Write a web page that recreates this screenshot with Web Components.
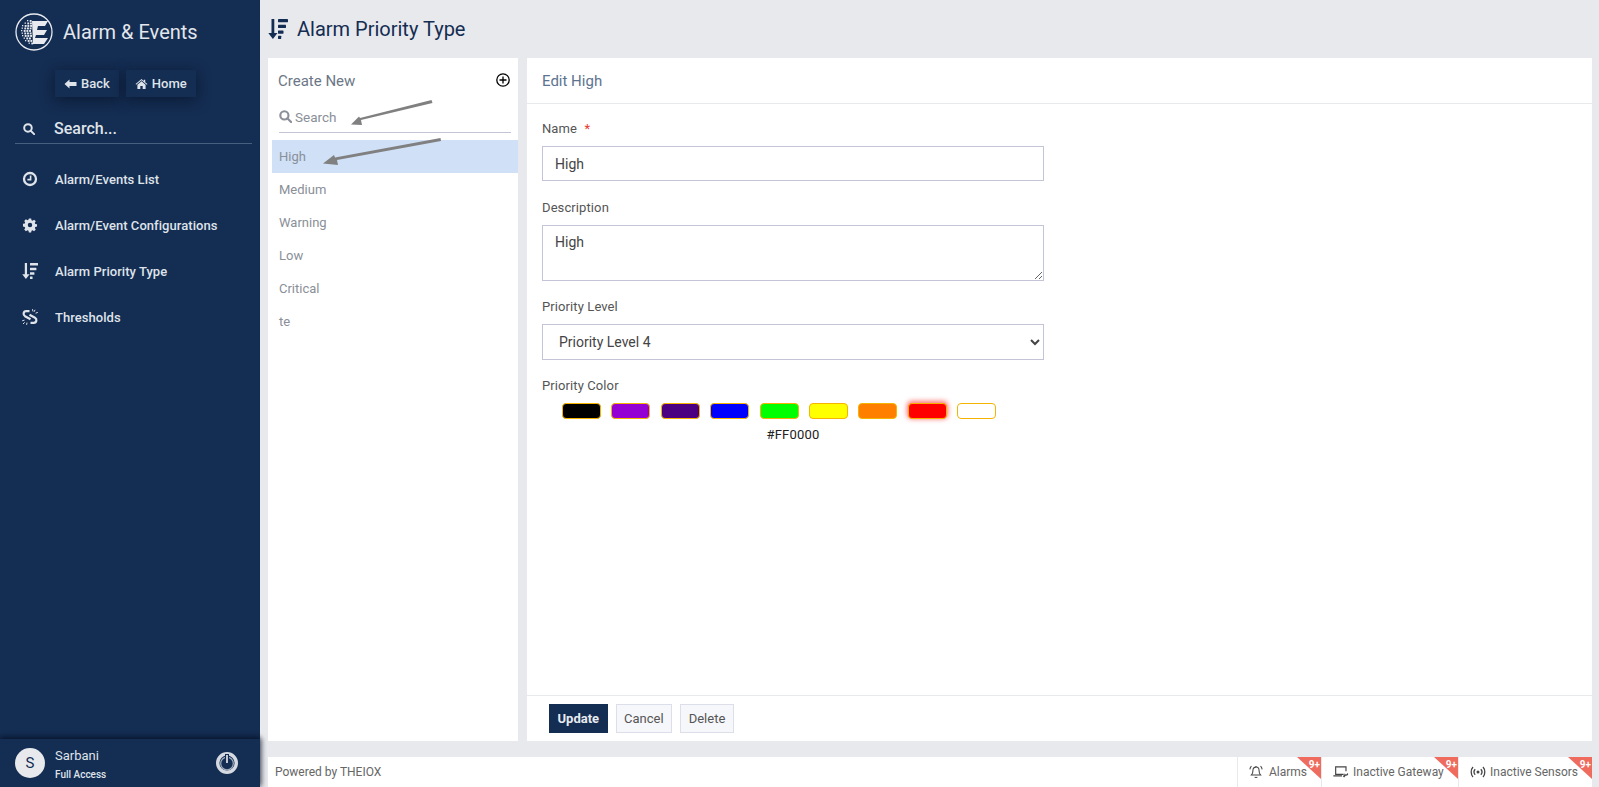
<!DOCTYPE html>
<html lang="en">
<head>
<meta charset="utf-8">
<title>Alarm Priority Type</title>
<style>
  html, body { margin: 0; height: 100%; overflow: hidden; }
  body { font-family: Roboto, "Liberation Sans", sans-serif; background: #e8e9ed; }
</style>
</head>
<body>
<app-shell>
  <side-bar slot="side"></side-bar>
  <page-title slot="title">Alarm Priority Type</page-title>
  <list-panel slot="list"></list-panel>
  <edit-panel slot="edit"></edit-panel>
  <foot-bar slot="foot"></foot-bar>
</app-shell>

<script>
// shared icons, all on their own viewBox so they can be sized from css
const ICONS = {
  sort: `<svg viewBox="0 0 20 20" fill="currentColor"><path d="M3.500 0h2.800v14h3.200L4.900 20 .3 14h3.200z"/><rect x="10" y="0" width="10" height="3.200" rx=".4"/><rect x="10" y="5.800" width="8" height="3.200" rx=".4"/><rect x="10" y="11.500" width="5.500" height="3.200" rx=".4"/><rect x="10" y="16.800" width="3.200" height="3.200" rx=".4"/></svg>`,
  clock: `<svg viewBox="0 0 16 16" fill="none" stroke="currentColor"><circle cx="8" cy="8" r="6" stroke-width="2.300"/><path d="M8.600 4.400v4.200H5.400" stroke-width="1.600"/></svg>`,
  gear: `<svg viewBox="-1 -1 18 18" fill="currentColor"><path fill-rule="evenodd" d="M6.700.6h2.600l.4 2 1.200.5 1.700-1.100 1.900 1.900-1.100 1.700.5 1.200 2 .4v2.600l-2 .4-.5 1.200 1.100 1.700-1.900 1.900-1.700-1.100-1.200.5-.4 2H6.700l-.4-2-1.200-.5-1.700 1.100-1.900-1.900 1.100-1.700-.5-1.200-2-.4V6.700l2-.4.5-1.200L1.500 3.400l1.900-1.900 1.700 1.100 1.200-.5zM8 5.500a2.500 2.500 0 1 0 0 5 2.500 2.500 0 0 0 0-5z"/></svg>`,
  chain: `<svg viewBox="0 0 16 16" fill="none" stroke="currentColor" stroke-width="2.200"><path d="M7.500 2.200H4.200C1.200 2.200.8 6 3 7.200l5.500 3"/><path d="M7.500 5.800l5.500 3c2.200 1.200 1.800 5-1.200 5H8.500"/><path d="M10.500 .2l.4 2.200M13 .8l-.9 2M15.800 3.400l-2.200.8M.2 11.800l2.300-.7M1 15l1.700-1.600M4.600 15.800l.4-2.200" stroke-width="1"/></svg>`,
  search: `<svg viewBox="0 0 14 14" fill="none" stroke="currentColor" stroke-width="2.300"><circle cx="5.800" cy="5.800" r="4.400"/><path d="m9 9 4 4" stroke-linecap="round"/></svg>`,
  back: `<svg viewBox="0 0 12 10" fill="currentColor"><path d="M0 5 5 .4v2.700h7v3.800H5v2.700z"/></svg>`,
  home: `<svg viewBox="0 0 13 11" fill="currentColor"><path d="M6.500 0 9 2.100V.9h1.600v2.600L13 5.600l-.6.7-5.900-5-5.900 5-.6-.7z"/><path d="M6.500 2.400 11 6.200V11H7.800V7.600H5.200V11H2V6.200z"/></svg>`,
  bell: `<svg viewBox="0 0 16 16" fill="none" stroke="currentColor" stroke-width="1.200"><path d="M8 2.400c-2.300 0-3.500 1.700-3.500 3.800 0 2.600-.6 4-1.700 5.200h10.400c-1.100-1.200-1.700-2.600-1.700-5.200 0-2.100-1.200-3.800-3.500-3.800z"/><path d="M6.600 13.600c.3.9 2.500.9 2.800 0M8 1v1.400M1 5c.2-1.500.8-2.700 1.800-3.600M15 5c-.2-1.500-.8-2.700-1.800-3.600"/></svg>`,
  laptop: `<svg viewBox="0 0 18 14" fill="none" stroke="currentColor" stroke-width="1.300"><path d="M12 9.600H3V1.200h11.600v5M.4 11.400h9.800"/><path d="M13 8.400l1.600 1.600 2-2 .6 1.600-1.400 1.500-1.300-.2-2 2.200-1.400-1.300 2-2.200z" fill="currentColor" stroke="none"/></svg>`,
  signal: `<svg viewBox="0 0 16 12" fill="none" stroke="currentColor" stroke-width="1.300"><circle cx="8" cy="6" r="1.500" fill="currentColor" stroke="none"/><path d="M5.200 3.200c-1.400 1.500-1.400 4 0 5.600M10.800 3.200c1.400 1.500 1.400 4 0 5.600M3 1C.6 3.600.6 8.400 3 11M13 1c2.400 2.600 2.400 7.400 0 10"/></svg>`
};

// root layout: sidebar on the left, title, two panels and footer on the right
class AppShell extends HTMLElement {
  constructor() {
    super();
    this.attachShadow({ mode: "open" }).innerHTML = `
      <style>
        :host { display: flex; height: 787px; width: 1599px; }
        .main { flex: 1; display: flex; flex-direction: column; min-width: 0; }
        .panels { display: flex; gap: 9px; height: 683px; padding-left: 8px; padding-right: 7px; }
        .foot { margin-top: 16px; padding-left: 8px; padding-right: 7px; }
      </style>
      <slot name="side"></slot>
      <div class="main">
        <slot name="title"></slot>
        <div class="panels"><slot name="list"></slot><slot name="edit"></slot></div>
        <div class="foot"><slot name="foot"></slot></div>
      </div>`;
  }
}

class NavItem extends HTMLElement {
  constructor() {
    super();
    this.attachShadow({ mode: "open" }).innerHTML = `
      <style>
        :host { display: flex; align-items: center; height: 46px; padding-left: 22px; font-size: 13px; font-weight: 500; letter-spacing: .05px; color: #dfe3ea; }
        .ic { width: 16px; height: 16px; margin-right: 17px; display: flex; }
        svg { width: 16px; height: 16px; }
      </style>
      <span class="ic">${ICONS[this.getAttribute("icon")]}</span><slot></slot>`;
  }
}

class SideBar extends HTMLElement {
  constructor() {
    super();
    // the logo's E dissolves into a grid of dots on its left side
    let dots = "";
    const rows = [[12, 2], [9, 3], [7, 4], [6, 4], [6, 4], [6, 4], [7, 4], [8, 3], [10, 3], [13, 2]];
    rows.forEach(([start, count], r) => {
      for (let c = 0; c < count; c++) {
        dots += `<rect x="${start + c * 2.7 + (r % 2) * .6}" y="${7 + r * 2.5}" width="${c === 0 ? 1.3 : 1.9}" height="${c === 0 ? 1.3 : 1.9}"/>`;
      }
    });
    this.attachShadow({ mode: "open" }).innerHTML = `
      <style>
        :host { display: flex; flex-direction: column; width: 260px; height: 787px; flex: none; background: #142d52; color: #dfe3ea; position: relative; z-index: 1; }
        .brand { display: flex; align-items: center; gap: 10px; padding: 13px 0 0 15px; height: 38px; font-size: 20px; color: #e3e6ec; }
        .brand svg { width: 38px; height: 38px; }
        .links { display: flex; gap: 7px; margin: 19px 0 0 55px; }
        .btn { display: flex; align-items: center; gap: 4px; height: 27px; padding: 0 9px; font-size: 13px; font-weight: 500; background: #142d52; box-shadow: 0 3px 14px rgba(10, 20, 42, .75); }
        .btn svg { height: 10px; width: 13px; }
        .search { display: flex; align-items: center; margin: 17px 8px 0 15px; height: 29px; border-bottom: 1px solid #47607f; font-size: 16px; font-weight: 500; }
        .search svg { width: 12px; height: 12px; margin: 0 19px 0 8px; }
        nav { margin-top: 12px; }
        .user { margin-top: auto; height: 48px; display: flex; align-items: center; padding-left: 15px; box-shadow: 0 -2px 5px rgba(5, 12, 30, .6), 2px 0 5px rgba(5, 12, 30, .4); }
        .avatar { width: 30px; height: 30px; border-radius: 50%; background: #e8e9ed; color: #142d52; display: flex; align-items: center; justify-content: center; font-size: 15px; }
        .who { margin-left: 10px; display: flex; flex-direction: column; gap: 6px; padding-top: 2px; }
        .name { font-size: 13px; line-height: 15px; }
        .role { font-size: 10px; line-height: 12px; font-weight: 500; }
        .power { margin-left: auto; margin-right: 22px; width: 22px; height: 22px; }
      </style>
      <div class="brand">
        <svg viewBox="0 0 38 38"><circle cx="19" cy="19" r="18" fill="none" stroke="#e8eaef" stroke-width="1.300"/>
          <g fill="#e8eaef">${dots}<path d="M17 8h16l-3 5H23l-1 4h10l-3 5h-8l-1 3h13l-4 6H18z"/></g></svg>
        <span>Alarm &amp; Events</span>
      </div>
      <div class="links">
        <div class="btn">${ICONS.back}Back</div>
        <div class="btn">${ICONS.home}Home</div>
      </div>
      <div class="search">${ICONS.search}<span>Search...</span></div>
      <nav>
        <nav-item icon="clock">Alarm/Events List</nav-item>
        <nav-item icon="gear">Alarm/Event Configurations</nav-item>
        <nav-item icon="sort">Alarm Priority Type</nav-item>
        <nav-item icon="chain">Thresholds</nav-item>
      </nav>
      <div class="user">
        <div class="avatar">S</div>
        <div class="who"><span class="name">Sarbani</span><span class="role">Full Access</span></div>
        <svg class="power" viewBox="0 0 22 22" fill="none"><circle cx="11" cy="11" r="9.300" stroke="#d5d9e1" stroke-width="3.400"/><circle cx="11" cy="11.500" r="6.300" stroke="#a3aec0" stroke-width="1.200"/><path d="M11 2v10" stroke="#142d52" stroke-width="4"/><path d="M11 3v8" stroke="#d5d9e1" stroke-width="1.800"/></svg>
      </div>`;
  }
}

class PageTitle extends HTMLElement {
  constructor() {
    super();
    this.attachShadow({ mode: "open" }).innerHTML = `
      <style>
        :host { display: flex; align-items: center; height: 58px; padding-left: 8px; font-size: 20px; color: #142d52; box-sizing: border-box; }
        .ic { width: 20px; height: 20px; margin-right: 9px; display: flex; }
      </style>
      <span class="ic">${ICONS.sort}</span><slot></slot>`;
  }
}

class ListPanel extends HTMLElement {
  constructor() {
    super();
    const items = ["High", "Medium", "Warning", "Low", "Critical", "te"];
    this.attachShadow({ mode: "open" }).innerHTML = `
      <style>
        :host { display: block; width: 250px; flex: none; background: #fff; position: relative; padding: 0 0 0 4px; box-sizing: border-box; }
        .top { display: flex; align-items: center; justify-content: space-between; height: 46px; padding: 0 8px 0 6px; font-size: 15px; color: #6b7786; }
        .top svg { width: 14px; height: 14px; margin-top: -3px; }
        .search { display: flex; align-items: center; gap: 3px; margin: 0 7px 0 7px; height: 29px; padding-bottom: 3px; box-sizing: border-box; border-bottom: 1px solid #c3c4d6; font-size: 13.500px; color: #8b8f99; }
        .search svg { width: 13px; height: 13px; }
        ul { list-style: none; margin: 7px 0 0; padding: 0; }
        li { height: 33px; line-height: 33px; padding-left: 7px; font-size: 13px; color: #8a8f98; }
        li.sel { background: #cfe0f7; }
        .arrows { position: absolute; left: -268px; top: -58px; width: 600px; height: 200px; pointer-events: none; }
      </style>
      <div class="top"><span>Create New</span>
        <svg viewBox="0 0 14 14" fill="none" stroke="#000" stroke-width="1.300"><circle cx="7" cy="7" r="6.200"/><path d="M7 3.500v7M3.500 7h7"/></svg></div>
      <div class="search">${ICONS.search}<span>Search</span></div>
      <ul>${items.map((t, i) => `<li class="${i ? "" : "sel"}">${t}</li>`).join("")}</ul>
      <svg class="arrows" viewBox="0 0 600 200" fill="#808080">
        <path d="M431.500 100 432.500 103 361 120 362 125 351 124.500 359 116.500 360 118z"/>
        <path d="M440.500 138 441 141 337 160 338 165 323 163.500 334 155 335 157.500z"/>
      </svg>`;
  }
}

class ColorSwatch extends HTMLElement {
  constructor() {
    super();
    const sel = this.hasAttribute("selected");
    this.attachShadow({ mode: "open" }).innerHTML = `
      <style>
        :host { display: block; width: 39px; height: 16px; box-sizing: border-box; border: 1px solid #f5b400; border-radius: 4px; background: ${this.getAttribute("color")}; ${sel ? "box-shadow: 0 -1px 5px 1px rgba(255, 0, 0, .55);" : ""} }
      </style>`;
  }
}

class FormField extends HTMLElement {
  constructor() {
    super();
    const req = this.hasAttribute("required") ? '<i>*</i>' : "";
    this.attachShadow({ mode: "open" }).innerHTML = `
      <style>
        :host { display: block; font-size: 13px; color: #555; }
        label { display: block; line-height: 16px; margin-bottom: 9px; letter-spacing: .1px; }
        i { color: #e8392f; font-style: normal; margin-left: 4px; }
      </style>
      <label>${this.getAttribute("label")} ${req}</label><slot></slot>`;
  }
}

class EditPanel extends HTMLElement {
  constructor() {
    super();
    const colors = ["#000000", "#9400d3", "#4b0082", "#0000ff", "#00ff00", "#ffff00", "#ff7f00", "#ff0000", "#ffffff"];
    this.attachShadow({ mode: "open" }).innerHTML = `
      <style>
        :host { display: flex; flex-direction: column; flex: 1; min-width: 0; background: #fff; }
        .head { height: 46px; display: flex; align-items: center; padding: 1px 0 0 15px; font-size: 15px; color: #5d7390; border-bottom: 1px solid #e8e9ed; flex: none; box-sizing: border-box; }
        form { flex: 1; padding: 17px 15px 0; display: flex; flex-direction: column; gap: 18px; }
        form-field.low { margin-top: 1px; }
        input, textarea, select { display: block; width: 502px; box-sizing: border-box; border: 1px solid #c3c4d6; font: 14px Roboto, "Liberation Sans", sans-serif; color: #444; background: #fff; outline: none; margin: 0; }
        input { height: 35px; padding: 0 12px; }
        textarea { height: 56px; padding: 8px 12px; }
        select { height: 36px; padding: 0 12px; }
        .swatches { display: flex; justify-content: space-between; margin-left: 20px; width: 434px; }
        .code { width: 502px; text-align: center; font-size: 13px; color: #222; margin-top: 8px; line-height: 16px; letter-spacing: .2px; }
        .actions { height: 45px; flex: none; border-top: 1px solid #e8e9ed; display: flex; align-items: center; gap: 8px; padding: 0 0 0 22px; }
        button { height: 29px; font: 13px Roboto, "Liberation Sans", sans-serif; color: #555; background: #f6f7fb; border: 1px solid #dcdfea; padding: 0 7.500px; margin: 0; }
        button.primary { background: #142d52; border-color: #142d52; color: #e8ebf0; font-weight: 700; }
      </style>
      <div class="head">Edit High</div>
      <form>
        <form-field label="Name" required><input value="High"></form-field>
        <form-field class="low" label="Description"><textarea>High</textarea></form-field>
        <form-field label="Priority Level"><select><option>Priority Level 4</option></select></form-field>
        <form-field label="Priority Color">
          <div class="swatches">${colors.map(c => `<color-swatch color="${c}" ${c === "#ff0000" ? "selected" : ""}></color-swatch>`).join("")}</div>
          <div class="code">#FF0000</div>
        </form-field>
      </form>
      <div class="actions">
        <button type="button" class="primary">Update</button>
        <button type="button">Cancel</button>
        <button type="button">Delete</button>
      </div>`;
  }
}

class StatusTab extends HTMLElement {
  constructor() {
    super();
    this.attachShadow({ mode: "open" }).innerHTML = `
      <style>
        :host { display: flex; align-items: center; height: 30px; box-sizing: border-box; border-left: 1px solid #e8e9ed; position: relative; padding-left: 11px; font-size: 12px; color: #666; width: ${this.getAttribute("w")}px; }
        .ic { width: 16px; height: 14px; margin-right: 4px; display: flex; color: #444; }
        .flag { position: absolute; right: 0; top: 0; width: 0; height: 0; border-top: 22px solid #ee6b5e; border-left: 24px solid transparent; }
        .n { position: absolute; right: 1px; top: 2px; font-size: 10px; font-weight: 700; color: #fff; line-height: 12px; }
      </style>
      <span class="ic">${ICONS[this.getAttribute("icon")]}</span><slot></slot>
      <span class="flag"></span><span class="n">9+</span>`;
  }
}

class FootBar extends HTMLElement {
  constructor() {
    super();
    this.attachShadow({ mode: "open" }).innerHTML = `
      <style>
        :host { display: flex; align-items: center; height: 30px; background: #fff; font-size: 12px; color: #666; padding-left: 7px; }
        .right { margin-left: auto; display: flex; }
      </style>
      <span>Powered by THEIOX</span>
      <div class="right">
        <status-tab icon="bell" w="84">Alarms</status-tab>
        <status-tab icon="laptop" w="137">Inactive Gateway</status-tab>
        <status-tab icon="signal" w="134">Inactive Sensors</status-tab>
      </div>`;
  }
}

customElements.define("nav-item", NavItem);
customElements.define("color-swatch", ColorSwatch);
customElements.define("form-field", FormField);
customElements.define("status-tab", StatusTab);
customElements.define("side-bar", SideBar);
customElements.define("page-title", PageTitle);
customElements.define("list-panel", ListPanel);
customElements.define("edit-panel", EditPanel);
customElements.define("foot-bar", FootBar);
customElements.define("app-shell", AppShell);
</script>
</body>
</html>
